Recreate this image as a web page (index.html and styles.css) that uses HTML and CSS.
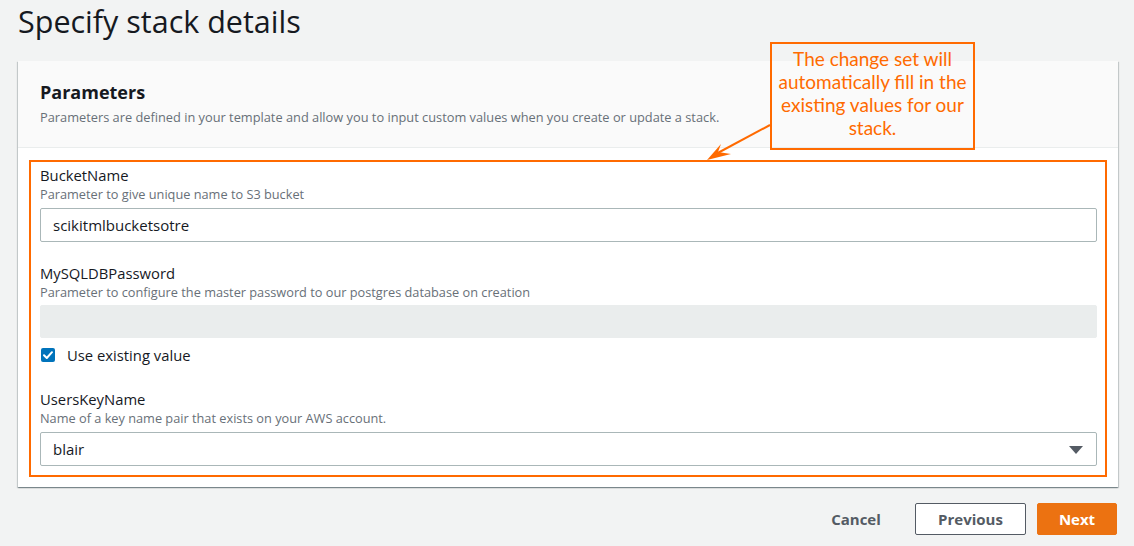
FILE: index.html
```html
<!DOCTYPE html>
<html>
<head>
<meta charset="utf-8">
<link rel="stylesheet" href="styles.css">
</head>
<body>
<h1 class="page-title">Specify stack details</h1>

<section class="card">
  <header class="card-header">
    <h2 class="card-title">Parameters</h2>
    <p class="card-desc">Parameters are defined in your template and allow you to input custom values when you create or update a stack.</p>
  </header>
  <div class="card-body">
    <div class="highlight">
      <div class="field">
        <div class="label">BucketName</div>
        <div class="desc">Parameter to give unique name to S3 bucket</div>
        <div class="input">scikitmlbucketsotre</div>
      </div>
      <div class="field">
        <div class="label">MySQLDBPassword</div>
        <div class="desc">Parameter to configure the master password to our postgres database on creation</div>
        <div class="input disabled"></div>
        <div class="check-row">
          <span class="checkbox"><svg width="14" height="14" viewBox="0 0 14 14"><path d="M3 7.2 L5.8 10 L11 4.2" fill="none" stroke="#fff" stroke-width="2" stroke-linecap="round" stroke-linejoin="round"/></svg></span>
          <span class="check-label">Use existing value</span>
        </div>
      </div>
      <div class="field field-last">
        <div class="label">UsersKeyName</div>
        <div class="desc">Name of a key name pair that exists on your AWS account.</div>
        <div class="input select"><span>blair</span><span class="caret"></span></div>
      </div>
    </div>
  </div>
</section>

<div class="actions">
  <button class="btn link">Cancel</button>
  <button class="btn normal">Previous</button>
  <button class="btn primary">Next</button>
</div>

<div class="callout">The change set will automatically fill in the existing values for our stack.</div>
<svg class="callout-arrow" width="80" height="50" viewBox="0 0 80 50">
  <line x1="70" y1="13" x2="14" y2="43" stroke="#ff6a00" stroke-width="2"/>
  <path d="M7 48 L21 32 L18 40 L31 42 Z" fill="#ff6a00"/>
</svg>
</body>
</html>
```

FILE: styles.css
```css
* { box-sizing: border-box; }
html, body { margin: 0; padding: 0; }
body {
  background: #f2f3f3;
  font-family: "Open Sans", "Noto Sans", sans-serif;
  color: #16191f;
  width: 1134px;
  height: 546px;
  position: relative;
  overflow: hidden;
}
.page-title {
  margin: 0;
  padding: 0 0 0 18px;
  height: 61px;
  font-size: 30.5px;
  font-weight: 400;
  line-height: 42px;
  color: #16191f;
}
.card {
  margin-left: 18px;
  width: 1100px;
  background: #fff;
  box-shadow: 0 1px 1px 0 rgba(0,28,36,.3), 1px 1px 1px 0 rgba(0,28,36,.15), -1px 1px 1px 0 rgba(0,28,36,.15);
}
.card-header {
  background: #fafafa;
  border-bottom: 1px solid #eaeded;
  padding: 18px 22px 0;
  height: 87px;
}
.card-title {
  margin: 0;
  font-size: 18px;
  font-weight: 700;
  line-height: 26px;
}
.card-desc {
  margin: 0;
  font-size: 12.8px;
  line-height: 24px;
  color: #687078;
}
.card-body {
  padding: 12px 11px 10px 11px;
}
.highlight {
  border: 2px solid #ff6a00;
  padding: 2px 8px 9px 9px;
}
.field + .field { margin-top: 20px; }
.field-last { margin-top: 22px !important; }
.label {
  font-size: 14.8px;
  line-height: 22px;
  color: #16191f;
}
.desc {
  font-size: 12.75px;
  line-height: 16px;
  color: #687078;
}
.input {
  margin-top: 6px;
  height: 34px;
  border: 1px solid #aab7b8;
  border-radius: 2px;
  padding: 0 12px;
  font-size: 15px;
  line-height: 32px;
  color: #16191f;
}
.input.disabled {
  margin-top: 5px;
  height: 33px;
  background: #eaeded;
  border-color: #eaeded;
}
.select {
  display: flex;
  justify-content: space-between;
  align-items: center;
}
.caret {
  width: 0;
  height: 0;
  border-left: 7px solid transparent;
  border-right: 7px solid transparent;
  border-top: 8px solid #545b64;
  margin-right: 1px;
  margin-top: 1px;
}
.check-row {
  display: flex;
  align-items: center;
  margin-top: 6px;
  height: 22px;
}
.checkbox {
  width: 14px;
  height: 14px;
  background: #0073bb;
  border-radius: 2px;
  margin-left: 1px;
  display: flex;
}
.check-label {
  margin-left: 12px;
  font-size: 14.8px;
  line-height: 22px;
}
.actions {
  display: flex;
  justify-content: flex-end;
  align-items: center;
  gap: 11px;
  width: 1117px;
  margin-top: 16px;
}
.btn {
  font-family: "Open Sans", "Noto Sans", sans-serif;
  font-size: 15px;
  font-weight: 700;
  height: 32px;
  border-radius: 2px;
  padding: 0;
  cursor: pointer;
}
.btn.link {
  background: none;
  border: none;
  color: #545b64;
  width: 80px;
  margin-right: 8px;
}
.btn.normal {
  background: #fff;
  border: 1px solid #545b64;
  color: #545b64;
  width: 111px;
}
.btn.primary {
  background: #ec7211;
  border: 1px solid #ec7211;
  color: #fff;
  width: 80px;
}
.callout {
  position: absolute;
  left: 770px;
  top: 42px;
  width: 205px;
  height: 108px;
  border: 2px solid #ff6a00;
  padding: 3px 2px 0;
  font-family: "Lato", sans-serif;
  font-size: 19px;
  line-height: 23px;
  color: #ff6a00;
  text-align: center;
}
.callout-arrow {
  position: absolute;
  left: 700px;
  top: 112px;
  overflow: visible;
}
```
